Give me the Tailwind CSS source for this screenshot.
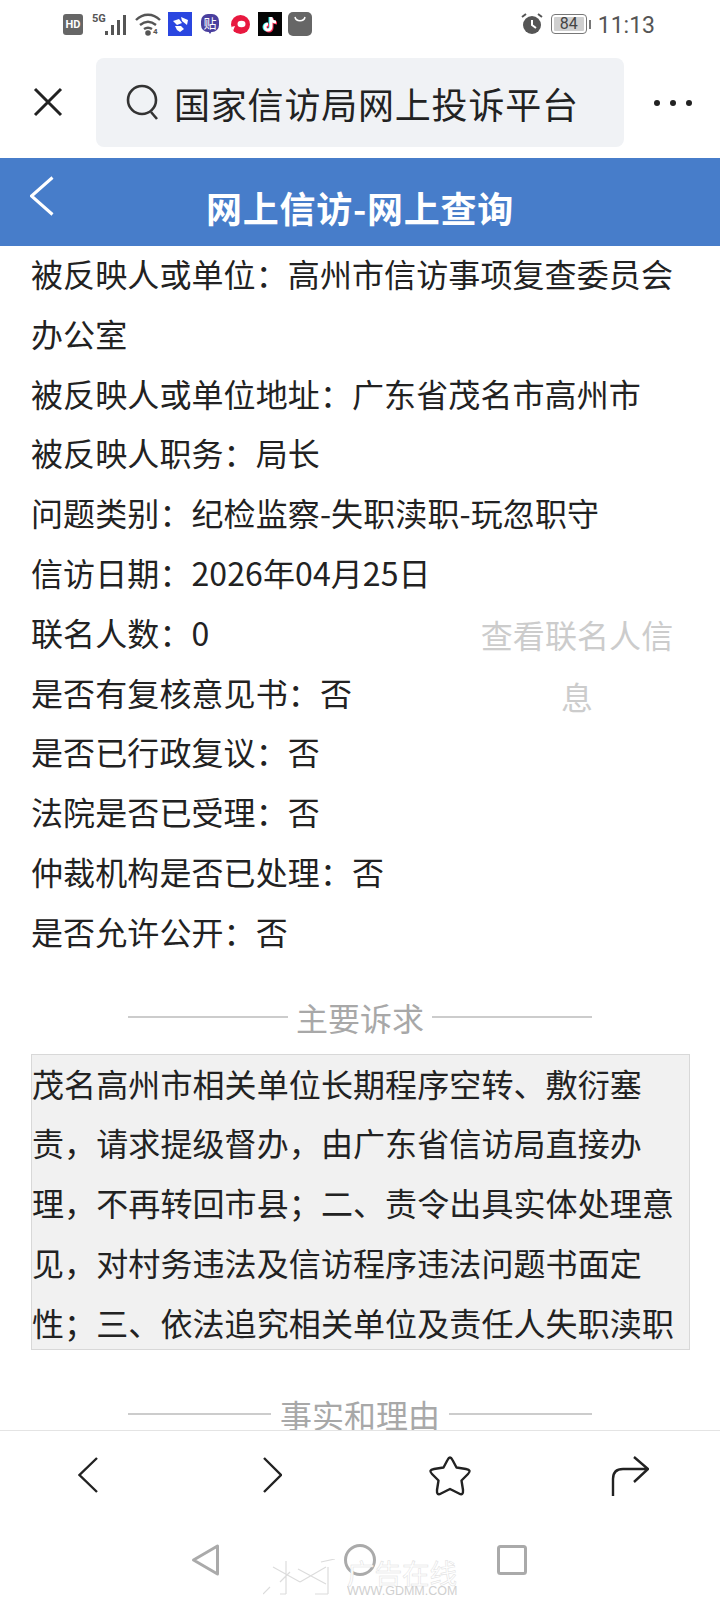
<!DOCTYPE html>
<html lang="zh">
<head>
  <meta charset="UTF-8">
  <meta name="viewport" content="width=device-width, initial-scale=1.0">
  <title>网上信访-网上查询</title>
  <script src="https://cdn.jsdelivr.net/npm/@tailwindcss/browser@4"></script>
</head>
<body class="bg-white font-['Noto_Sans_CJK_SC','Noto_Sans',sans-serif] text-[#222]">
  <div class="relative w-[720px] h-[1600px] overflow-hidden flex flex-col">

    <!-- status bar -->
    <div class="h-[58px] shrink-0 flex items-start pt-[12px] pl-[63px] pr-[65px] justify-between">
      <div class="flex items-center h-[24px]">
        <div class="w-[20px] h-[21px] rounded-[3px] bg-[#666] text-white text-[11px] font-bold leading-[21px] text-center font-['Roboto']">HD</div>
        <svg width="36" height="24" viewBox="0 0 36 24" fill="#555" class="ml-[9px]"><text x="0" y="10" font-size="11" font-family="Roboto" font-weight="700">5G</text><rect x="13" y="19" width="3" height="4"/><rect x="19" y="13" width="3" height="10"/><rect x="25" y="8" width="3" height="15"/><rect x="31" y="3" width="3" height="20"/></svg>
        <svg width="27" height="24" viewBox="0 0 27 24" fill="none" stroke="#555" stroke-width="2.4" class="ml-[7px]"><path d="M1 8c7-7 17-7 24 0"/><path d="M5 13c5-4 11-4 16 0"/><path d="M9 17c3-2 5-2 8 0"/><circle cx="13" cy="21" r="1.6" fill="#555"/><text x="18" y="22" font-size="8" font-family="Roboto" font-weight="700" fill="#555" stroke="none">4</text></svg>
        <svg width="24" height="24" viewBox="0 0 24 24" class="ml-[6px]"><rect width="24" height="24" fill="#2a46e0"/><path d="M5 9l6-2 3 4-5 2zM13 5l7 3-1 5-5-4zM7 14h6l3 3-4 3-3-2z" fill="#fff"/></svg>
        <svg width="18" height="24" viewBox="0 0 18 24" class="ml-[9px]"><rect y="2" width="18" height="18" rx="7" fill="#4a3f9e"/><path d="M7 19h4l-2 3z" fill="#4a3f9e"/><text x="9" y="16" font-size="13" fill="#fff" text-anchor="middle" font-family="Noto Sans CJK SC">贴</text></svg>
        <svg width="19" height="24" viewBox="0 0 19 24" class="ml-[12px]"><circle cx="9.5" cy="12.5" r="9.5" fill="#e8183f"/><ellipse cx="10.5" cy="12" rx="4" ry="3.2" fill="#fff"/><path d="M0 15l4-1-2 5z" fill="#fff"/></svg>
        <svg width="24" height="24" viewBox="0 0 24 24" fill="none" stroke-width="3" class="ml-[8px]"><rect width="24" height="24" fill="#050505"/><path d="M12 5v10a3 3 0 1 1-3-3M12 5c0 3 2 5 5 5" stroke="#25f4ee"/><path d="M14 6v10a3 3 0 1 1-3-3M14 6c0 3 2 5 5 5" stroke="#fe2c55"/><path d="M13 5v10a3 3 0 1 1-3-3M13 5c0 3 2 5 5 5" stroke="#fff"/></svg>
        <svg width="24" height="24" viewBox="0 0 24 24" class="ml-[6px]"><rect width="24" height="24" rx="5" fill="#666"/><path d="M7 5c1 5 9 5 10 0" fill="none" stroke="#fff" stroke-width="1.5"/></svg>
      </div>
      <div class="flex items-center h-[24px]">
        <svg width="24" height="24" viewBox="0 0 24 24"><circle cx="12" cy="13" r="9" fill="#555"/><path d="M12 8v5l4 3" fill="none" stroke="#fff" stroke-width="2"/><path d="M2 5l4-3M22 5l-4-3" stroke="#555" stroke-width="2"/></svg>
        <div class="ml-[7px] w-[36px] h-[20px] border-[1.5px] border-[#777] rounded-[4px] p-[2px]"><div class="w-full h-full bg-[#d0d0d0] rounded-[1px] text-[16px] leading-[14px] text-center text-[#444] font-['Roboto']">84</div></div>
        <div class="w-[2px] h-[9px] bg-[#777] ml-[2px]"></div>
        <div class="ml-[7px] pt-[3px] text-[23px] leading-[24px] text-[#555] font-['Roboto']">11:13</div>
      </div>
    </div>

    <!-- browser bar -->
    <div class="h-[100px] shrink-0 flex items-start">
      <svg width="96" height="90" viewBox="0 0 96 90" fill="none" stroke="#222" stroke-width="3"><path d="M35 31l26 26M61 31L35 57"/></svg>
      <div class="w-[528px] h-[89px] rounded-[8px] bg-[#f0f2f5] flex items-center pl-[30px]">
        <svg width="34" height="38" viewBox="0 0 34 38" fill="none" stroke="#333" stroke-width="2.6" class="mr-[14px]"><circle cx="16" cy="16" r="14"/><path d="M25 28l6 7"/></svg>
        <span class="text-[36px] tracking-[0.8px]">国家信访局网上投诉平台</span>
      </div>
      <div class="flex-1 h-[89px] flex items-center justify-center gap-[10px] pl-[2px]">
        <span class="w-[6px] h-[6px] rounded-full bg-[#222]"></span><span class="w-[6px] h-[6px] rounded-full bg-[#222]"></span><span class="w-[6px] h-[6px] rounded-full bg-[#222]"></span>
      </div>
    </div>

    <!-- page title -->
    <div class="relative h-[88px] shrink-0 bg-[#477dca] flex items-center justify-center">
      <svg width="26" height="42" viewBox="0 0 26 42" fill="none" stroke="#fff" stroke-width="3" class="absolute left-[30px] top-[18px]"><path d="M22.5 1.5L1.5 20l21 18.5"/></svg>
      <h1 class="text-white text-[36px] font-bold pt-[10px] tracking-[0.75px]">网上信访-网上查询</h1>
    </div>

    <!-- scrolled content -->
    <div class="flex-1 overflow-hidden">
      <div class="px-[31px] text-[32px] leading-[59.8px] tracking-[0.1px] -mt-[2px]">
        <p>被反映人或单位：高州市信访事项复查委员会办公室</p>
        <p>被反映人或单位地址：广东省茂名市高州市</p>
        <p>被反映人职务：局长</p>
        <p>问题类别：纪检监察-失职渎职-玩忽职守</p>
        <p>信访日期：2026年04月25日</p>
        <div class="flex justify-between h-[59.8px]">
          <p>联名人数：0</p>
          <p class="w-[200px] text-center leading-[62px] text-[#cccccc] mr-[12px]">查看联名人信息</p>
        </div>
        <p>是否有复核意见书：否</p>
        <p>是否已行政复议：否</p>
        <p>法院是否已受理：否</p>
        <p>仲裁机构是否已处理：否</p>
        <p>是否允许公开：否</p>
      </div>

      <div class="mt-[25px] flex items-center justify-center gap-[8px] text-[32px] leading-[60px] text-[#a8a8a8]">
        <span class="w-[160px] h-[2px] bg-[#ccc]"></span>主要诉求<span class="w-[160px] h-[2px] bg-[#ccc]"></span>
      </div>

      <div class="ml-[31px] mr-[30px] mt-[7px] h-[296px] overflow-hidden border border-[#d8d8d8] bg-[#f1f1f1] text-[32px] leading-[59.8px] tracking-[0.1px]">
        <div class="-mt-[1px]">茂名高州市相关单位长期程序空转、敷衍塞责，请求提级督办，由广东省信访局直接办理，不再转回市县；二、责令出具实体处理意见，对村务违法及信访程序违法问题书面定性；三、依法追究相关单位及责任人失职渎职</div>
      </div>

      <div class="mt-[34px] flex items-center justify-center gap-[9px] text-[32px] leading-[60px] text-[#a8a8a8]">
        <span class="w-[143px] h-[2px] bg-[#ccc]"></span>事实和理由<span class="w-[143px] h-[2px] bg-[#ccc]"></span>
      </div>
    </div>

    <!-- browser toolbar -->
    <div class="h-[100px] shrink-0 bg-white border-t border-[#e4e4e4] flex items-start pl-[78px] pt-[24px]">
      <svg width="20" height="38" viewBox="0 0 20 38" fill="none" stroke="#222" stroke-width="2.4" class="mt-[1px]"><path d="M19 2L1.5 19 19 36"/></svg>
      <svg width="20" height="38" viewBox="0 0 20 38" fill="none" stroke="#222" stroke-width="2.4" class="mt-[1px] ml-[164px]"><path d="M2 2l17 17L2 36"/></svg>
      <svg width="44" height="42" viewBox="0 0 44 42" fill="none" stroke="#222" stroke-width="2.4" stroke-linejoin="round" class="ml-[146px]"><path d="M19.5 5Q22 0 24.5 5L28.5 12.5 38 14Q44 15 40 19L33.5 25.5 35 35Q35.5 41 31 38.5L22 34 13 38.5Q8.5 41 9 35L10.5 25.5 4 19Q0 15 6 14L15.5 12.5Z"/></svg>
      <svg width="38" height="42" viewBox="0 0 38 42" fill="none" stroke="#222" stroke-width="2.4" class="ml-[139px]"><path d="M2 41V24Q2 14 12 14H37M23 2l14 12-14 13"/></svg>
    </div>

    <!-- system nav -->
    <div class="h-[70px] shrink-0 relative flex items-start pl-[190px] pt-[13px]">
      <svg width="30" height="34" viewBox="0 0 30 34" fill="none" stroke="#aaa" stroke-width="3" stroke-linejoin="round"><path d="M27.5 3v28l-24-14z"/></svg>
      <svg width="34" height="34" viewBox="0 0 34 34" fill="none" stroke="#aaa" stroke-width="3" class="ml-[123px]"><circle cx="17" cy="17" r="14.5"/></svg>
      <svg width="32" height="32" viewBox="0 0 32 32" fill="none" stroke="#aaa" stroke-width="3" class="ml-[119px] mt-[1px]"><rect x="2.5" y="2.5" width="27" height="27" rx="2"/></svg>
      <!-- watermark over nav -->
      <div class="absolute left-[263px] top-[28px] flex items-start">
        <svg width="72" height="36" viewBox="0 -1 72 36" fill="none" stroke="#dcdcdc" stroke-width="1.2" class="mt-[1px]"><path d="M10 7l27 15M17 22l10-10M35 9l28 15M37 22L63 7M23 1v33M17 34h6M65 7v27M52 34h13M58 2l14-3M0 34l7-7"/></svg>
        <div class="ml-[12px] w-[112px] overflow-hidden">
          <div class="text-[27.5px] leading-[28px] whitespace-nowrap text-white [-webkit-text-stroke:0.5px_#dedede]">广告在线</div>
          <div class="text-[12.5px] leading-[10px] whitespace-nowrap text-[#cfcfcf] font-['Liberation_Sans']">WWW.GDMM.COM</div>
        </div>
      </div>
    </div>
  </div>
</body>
</html>
